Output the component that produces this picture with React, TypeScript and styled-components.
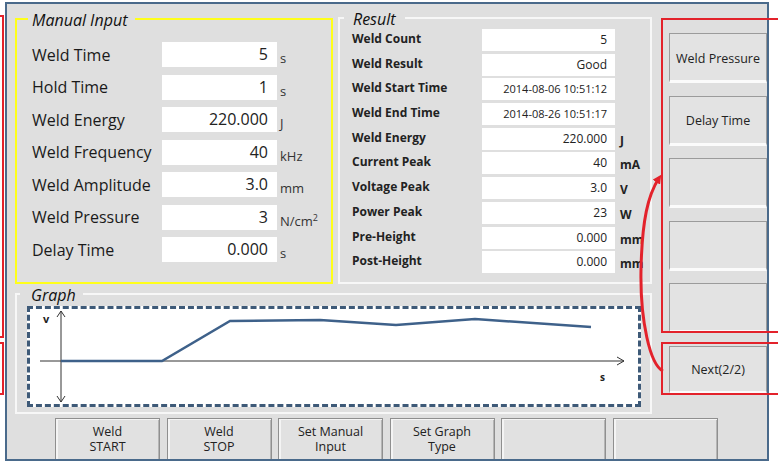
import styled, { createGlobalStyle } from "styled-components";

const GlobalStyle = createGlobalStyle`
  html, body {
    margin: 0;
    padding: 0;
    background: #ffffff;
  }
  body {
    font-family: "Open Sans", "Liberation Sans", sans-serif;
  }
`;

const WIN_BG = "#dfdfdf";

const Page = styled.div`
  position: relative;
  width: 778px;
  height: 462px;
  overflow: hidden;
  box-sizing: border-box;
  padding: 2px 0 0 5px;
  background: #ffffff;
`;

const Window = styled.div`
  width: 764px;
  height: 459px;
  box-sizing: border-box;
  border: 2px solid #4a6a8b;
  background: ${WIN_BG};
  display: flex;
  flex-direction: column;
`;

const Content = styled.div`
  display: flex;
  padding: 13px 0 0 8px;
`;

const LeftCol = styled.div`
  width: 637px;
  display: flex;
  flex-direction: column;
  gap: 9px;
`;

const TopRow = styled.div`
  display: flex;
  gap: 5px;
  height: 267px;
`;

const Group = styled.div<{ $border: string; $w: number; $h: number; $mt?: number }>`
  width: ${(p) => p.$w}px;
  height: ${(p) => p.$h}px;
  margin-top: ${(p) => p.$mt ?? 0}px;
  box-sizing: border-box;
  border: 2px solid ${(p) => p.$border};
  display: flex;
  flex-direction: column;
`;

const GroupTitle = styled.div<{ $ml: number; $pl: number; $pr: number }>`
  align-self: flex-start;
  margin: -9px 0 0 ${(p) => p.$ml}px;
  padding: 0 ${(p) => p.$pr}px 0 ${(p) => p.$pl}px;
  background: ${WIN_BG};
  font-size: 16px;
  line-height: 18px;
  font-style: italic;
  color: #111;
`;

const RowList = styled.div<{ $mt: number; $gap: number; $pl: number }>`
  display: flex;
  flex-direction: column;
  margin-top: ${(p) => p.$mt}px;
  gap: ${(p) => p.$gap}px;
  padding-left: ${(p) => p.$pl}px;
`;

const InputRow = styled.div`
  display: flex;
  align-items: center;
  height: 25px;
`;

const InputLabel = styled.div`
  width: 130px;
  font-size: 16px;
  color: #1a1a1a;
  white-space: nowrap;
`;

const InputValue = styled.div`
  width: 115px;
  height: 25px;
  box-sizing: border-box;
  padding-right: 9px;
  background: #ffffff;
  text-align: right;
  font-size: 16px;
  line-height: 25px;
  color: #222;
`;

const InputUnit = styled.div`
  align-self: flex-end;
  margin-left: 3px;
  font-size: 13px;
  line-height: 17px;
  color: #333;
  white-space: nowrap;

  sup {
    font-size: 9px;
    line-height: 0;
  }
`;

const ResultRow = styled.div`
  display: flex;
  align-items: center;
  height: 22px;
`;

const ResultLabel = styled.div`
  width: 130px;
  padding-bottom: 3px;
  font-size: 12px;
  font-weight: 700;
  color: #222;
  white-space: nowrap;
`;

const ResultValue = styled.div<{ $small?: boolean }>`
  width: 133px;
  height: 22px;
  box-sizing: border-box;
  padding-right: 8px;
  background: #ffffff;
  text-align: right;
  font-size: ${(p) => (p.$small ? 11 : 12)}px;
  line-height: 22px;
  color: #222;
`;

const ResultUnit = styled.div`
  align-self: flex-end;
  width: 23px;
  margin-left: 5px;
  font-size: 12px;
  font-weight: 700;
  line-height: 18px;
  color: #222;
  white-space: nowrap;
`;

const GraphArea = styled.div`
  margin: 2px 9px 0 10px;
  height: 101px;
  box-sizing: border-box;
  border: 3px dashed #3e5a78;
  background: #ffffff;

  svg {
    display: block;
  }
`;

const RightCol = styled.div`
  width: 98px;
  margin-left: 17px;
  padding-top: 16px;
  display: flex;
  flex-direction: column;
  gap: 12.5px;
`;

const SideButton = styled.div<{ $h?: number }>`
  height: ${(p) => p.$h ?? 50}px;
  box-sizing: border-box;
  border: 1px solid #9b9b9b;
  border-bottom: 3px solid #fbfbfb;
  background: #e3e3e3;
  display: flex;
  align-items: center;
  justify-content: center;
  padding-top: 2px;
  font-size: 12.5px;
  color: #222;
`;

const BottomBar = styled.div`
  display: flex;
  gap: 6.5px;
  height: 41px;
  margin-top: 4px;
  padding-left: 48px;
`;

const BottomButton = styled.div`
  width: 105px;
  box-sizing: border-box;
  border: 1px solid #8f8f8f;
  border-bottom: none;
  box-shadow: inset 2px 1px 0 #f4f4f4, inset -1px 0 0 #b5b5b5;
  background: #e1e1e1;
  display: flex;
  flex-direction: column;
  align-items: center;
  justify-content: center;
  font-size: 12.5px;
  line-height: 15.5px;
  color: #222;
  text-align: center;
`;

const Marker = styled.div<{ $l: number; $t: number; $w: number; $h: number }>`
  position: absolute;
  left: ${(p) => p.$l}px;
  top: ${(p) => p.$t}px;
  width: ${(p) => p.$w}px;
  height: ${(p) => p.$h}px;
  box-sizing: border-box;
  border: 2.5px solid #e3222b;
  pointer-events: none;
`;

const ArrowLayer = styled.svg`
  position: absolute;
  left: 0;
  top: 0;
  pointer-events: none;
`;

const manualRows = [
  { label: "Weld Time", value: "5", unit: "s" },
  { label: "Hold Time", value: "1", unit: "s" },
  { label: "Weld Energy", value: "220.000", unit: "J" },
  { label: "Weld Frequency", value: "40", unit: "kHz" },
  { label: "Weld Amplitude", value: "3.0", unit: "mm" },
  { label: "Weld Pressure", value: "3", unit: "N/cm2" },
  { label: "Delay Time", value: "0.000", unit: "s" },
];

const resultRows = [
  { label: "Weld Count", value: "5", unit: "" },
  { label: "Weld Result", value: "Good", unit: "" },
  { label: "Weld Start Time", value: "2014-08-06 10:51:12", unit: "", small: true },
  { label: "Weld End Time", value: "2014-08-26 10:51:17", unit: "", small: true },
  { label: "Weld Energy", value: "220.000", unit: "J" },
  { label: "Current Peak", value: "40", unit: "mA" },
  { label: "Voltage Peak", value: "3.0", unit: "V" },
  { label: "Power Peak", value: "23", unit: "W" },
  { label: "Pre-Height", value: "0.000", unit: "mm" },
  { label: "Post-Height", value: "0.000", unit: "mm" },
];

const sideButtons = ["Weld Pressure", "Delay Time", "", "", ""];

const bottomButtons = [
  ["Weld", "START"],
  ["Weld", "STOP"],
  ["Set Manual", "Input"],
  ["Set Graph", "Type"],
  [],
  [],
];

const renderUnit = (unit: string) =>
  unit === "N/cm2" ? (
    <>
      N/cm<sup>2</sup>
    </>
  ) : (
    unit
  );

const Graph = () => (
  <svg width="608" height="95" viewBox="30 309 608 95">
    <g stroke="#333" strokeWidth="1" fill="none">
      <line x1="61" y1="311" x2="61" y2="402" />
      <polyline points="57,317 61,311 65,317" />
      <polyline points="57,396 61,402 65,396" />
      <line x1="40" y1="361" x2="624" y2="361" />
      <polyline points="617,357 624,361 617,365" />
    </g>
    <polyline
      points="61,361 162,361 230,321 320,320 396,325 475,319 591,327"
      fill="none"
      stroke="#3e618a"
      strokeWidth="2.5"
    />
    <text x="43" y="323" fontSize="11" fontWeight="700" fill="#222" fontFamily="Open Sans, sans-serif">
      v
    </text>
    <text x="600" y="381" fontSize="10" fontWeight="700" fill="#222" fontFamily="Open Sans, sans-serif">
      s
    </text>
  </svg>
);

const App = () => {
  return (
    <Page>
      <GlobalStyle />
      <Window>
        <Content>
          <LeftCol>
            <TopRow>
              <Group $border="#ffff1a" $w={318} $h={266} $mt={1}>
                <GroupTitle $ml={11} $pl={4} $pr={8}>
                  Manual Input
                </GroupTitle>
                <RowList $mt={13} $gap={7.5} $pl={15}>
                  {manualRows.map((row) => (
                    <InputRow key={row.label}>
                      <InputLabel>{row.label}</InputLabel>
                      <InputValue>{row.value}</InputValue>
                      <InputUnit>{renderUnit(row.unit)}</InputUnit>
                    </InputRow>
                  ))}
                </RowList>
              </Group>
              <Group $border="#f7f7f7" $w={314} $h={267}>
                <GroupTitle $ml={4} $pl={9} $pr={9}>
                  Result
                </GroupTitle>
                <RowList $mt={1} $gap={2.7} $pl={12}>
                  {resultRows.map((row) => (
                    <ResultRow key={row.label}>
                      <ResultLabel>{row.label}</ResultLabel>
                      <ResultValue $small={row.small}>{row.value}</ResultValue>
                      <ResultUnit>{row.unit}</ResultUnit>
                    </ResultRow>
                  ))}
                </RowList>
              </Group>
            </TopRow>
            <Group $border="#f7f7f7" $w={637} $h={121}>
              <GroupTitle $ml={3} $pl={11} $pr={7}>
                Graph
              </GroupTitle>
              <GraphArea>
                <Graph />
              </GraphArea>
            </Group>
          </LeftCol>
          <RightCol>
            {sideButtons.map((label, i) => (
              <SideButton key={i}>{label}</SideButton>
            ))}
            <SideButton $h={48}>Next(2/2)</SideButton>
          </RightCol>
        </Content>
        <BottomBar>
          {bottomButtons.map((lines, i) => (
            <BottomButton key={i}>
              {lines.map((line) => (
                <span key={line}>{line}</span>
              ))}
            </BottomButton>
          ))}
        </BottomBar>
      </Window>

      <Marker $l={-100} $t={15} $w={103.5} $h={323} />
      <Marker $l={-100} $t={342} $w={103.5} $h={53} />
      <Marker $l={661} $t={18} $w={130} $h={315} />
      <Marker $l={661} $t={342} $w={130} $h={53} />

      <ArrowLayer width="778" height="462" viewBox="0 0 778 462">
        <defs>
          <marker
            id="redhead"
            markerWidth="9"
            markerHeight="9"
            refX="5"
            refY="4.5"
            orient="auto"
            markerUnits="userSpaceOnUse"
          >
            <path d="M0,0 L9,4.5 L0,9 z" fill="#e3222b" />
          </marker>
        </defs>
        <path
          d="M 663 371 C 650 365, 640 320, 641 270 C 642 220, 648 195, 659 178"
          fill="none"
          stroke="#e3222b"
          strokeWidth="3"
          markerEnd="url(#redhead)"
        />
      </ArrowLayer>
    </Page>
  );
};

export default App;
